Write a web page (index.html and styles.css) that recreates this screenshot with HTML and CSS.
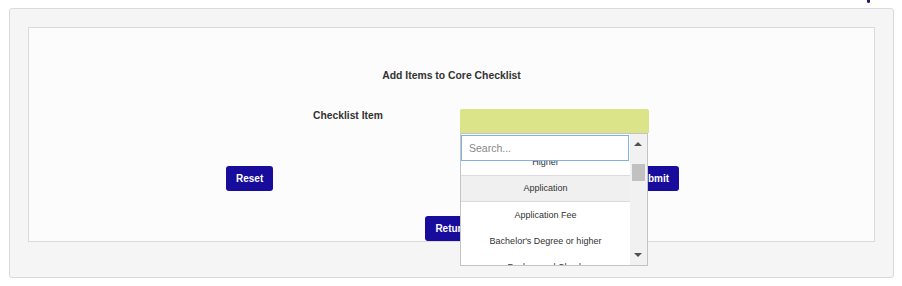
FILE: index.html
```html
<!DOCTYPE html>
<html lang="en">
<head>
  <meta charset="UTF-8">
  <title>Core Checklist</title>
  <link rel="stylesheet" href="styles.css">
</head>
<body>
  <!-- Top strip -->
  <div class="topbar"><span class="top-mark"></span></div>

  <!-- Outer panel -->
  <div class="panel">
    <div class="panel-body">
      <h3 class="title">Add Items to Core Checklist</h3>

      <div class="form-row">
        <label class="field-label">Checklist Item</label>
        <div class="select-wrap">
          <div class="select-box"></div>

          <!-- Open dropdown -->
          <div class="dropdown">
            <div class="dropdown-main">
              <input class="search" type="text" placeholder="Search...">
              <ul class="options">
                <li class="first">Higher</li>
                <li class="active">Application</li>
                <li>Application Fee</li>
                <li>Bachelor's Degree or higher</li>
                <li>Background Check</li>
              </ul>
            </div>
            <div class="scrollbar">
              <span class="arrow up"></span>
              <span class="thumb"></span>
              <span class="arrow down"></span>
            </div>
          </div>
        </div>
      </div>

      <div class="btn-row">
        <button class="btn">Reset</button>
        <button class="btn">Submit</button>
      </div>

      <div class="return-row">
        <button class="btn">Return</button>
      </div>
    </div>
  </div>
</body>
</html>
```

FILE: styles.css
```css
/* Global */
body {
  margin: 0;
  padding: 0 8px 8px 9px;
  background: #fff;
  font-family: 'Liberation Sans', Arial, sans-serif;
  color: #333;
}

/* Top strip */
.topbar {
  height: 8px;
  display: flex;
  justify-content: flex-end;
  padding-right: 24px;
}

.top-mark {
  width: 3px;
  height: 3px;
  background: #1c1c6e;
  border-radius: 0 0 2px 2px;
}

/* Outer panel */
.panel {
  background: #f5f5f5;
  border: 1px solid #dadada;
  border-radius: 3px;
  padding: 18px 18px 35px 18px;
}

.panel-body {
  background: #fcfcfc;
  border: 1px solid #dadada;
  padding-top: 41px;
}

.title {
  margin: 0;
  font-size: 10.4px;
  line-height: 14px;
  font-weight: bold;
  text-align: center;
}

/* Form row */
.form-row {
  display: flex;
  margin-top: 26px;
  padding-left: 284px;
}

.field-label {
  width: 147px;
  font-size: 10.3px;
  font-weight: bold;
  line-height: 13px;
}

.select-wrap {
  position: relative;
  width: 189px;
}

.select-box {
  height: 24px;
  background: #dce48a;
  border-radius: 2px 2px 0 0;
}

/* Dropdown */
.dropdown {
  position: absolute;
  top: 24px;
  left: 0;
  width: 186px;
  height: 131px;
  display: flex;
  background: #fff;
  border: 1px solid #c4c4c4;
  z-index: 10;
}

.dropdown-main {
  width: 169px;
  display: flex;
  flex-direction: column;
}

.search {
  box-sizing: border-box;
  width: 168px;
  height: 26px;
  margin: 1px 0 0 0;
  padding: 0 7px;
  border: 1px solid #7fb2e0;
  font-family: 'Liberation Sans', Arial, sans-serif;
  font-size: 10.5px;
  outline: none;
}

.search::placeholder {
  color: #888;
}

.options {
  list-style: none;
  margin: 0;
  padding: 0;
  flex: 1;
  overflow: hidden;
}

.options li {
  height: 25px;
  line-height: 25px;
  text-align: center;
  font-size: 9px;
  color: #333;
  border-top: 1px solid transparent;
}

.options li.first {
  margin-top: -12px;
}

.options li.active {
  background: #f0f0f0;
  border-top-color: #dcdcdc;
  border-bottom: 1px solid #dcdcdc;
}

/* Scrollbar */
.scrollbar {
  width: 17px;
  background: #f1f1f1;
  position: relative;
}

.arrow {
  position: absolute;
  left: 4px;
  width: 0;
  height: 0;
  border-left: 4px solid transparent;
  border-right: 4px solid transparent;
}

.arrow.up {
  top: 8px;
  border-bottom: 4px solid #505050;
}

.arrow.down {
  bottom: 8px;
  border-top: 4px solid #505050;
}

.thumb {
  position: absolute;
  top: 30px;
  left: 2px;
  width: 13px;
  height: 17px;
  background: #c1c1c1;
}

/* Buttons */
.btn-row {
  display: flex;
  justify-content: space-between;
  width: 453px;
  margin: 33px auto 0 197px;
}

.return-row {
  display: flex;
  justify-content: center;
  margin-top: 25px;
}

.btn {
  height: 25px;
  padding: 0 10px;
  background: #170c9c;
  color: #fff;
  border: none;
  border-radius: 3px;
  font-family: 'Liberation Sans', Arial, sans-serif;
  font-size: 10px;
  font-weight: bold;
  cursor: pointer;
}
```
